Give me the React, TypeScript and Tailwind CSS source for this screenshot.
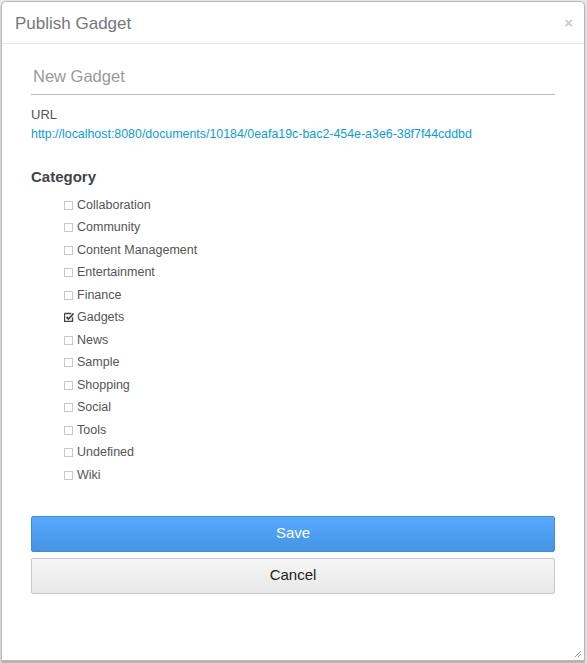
const categories = [
  "Collaboration",
  "Community",
  "Content Management",
  "Entertainment",
  "Finance",
  "Gadgets",
  "News",
  "Sample",
  "Shopping",
  "Social",
  "Tools",
  "Undefined",
  "Wiki",
];

function Box({ checked }: { checked: boolean }) {
  return (
    <span className="w-[9px] h-[9px] border border-[#c8c8c8] bg-white mr-[4px] inline-flex items-center justify-center relative">
      {checked && (
        <svg width="11" height="10" viewBox="0 0 11 10" className="absolute left-[-1px] top-[-2px]">
          <path d="M0.5 1.5 H7 M0.5 1.5 V9.5 H8.5 V5.5" stroke="#444" strokeWidth="1.4" fill="none" />
          <path d="M2.5 5 L4.5 7 L9.5 1.5" stroke="#444" strokeWidth="1.8" fill="none" />
        </svg>
      )}
    </span>
  );
}

export default function App() {
  return (
    <div className="w-[587px] h-[663px] bg-[#e4e8ec] font-['Liberation_Sans',Arial,sans-serif] p-[1px] pr-[2px] pb-[2px]">
      <div className="relative h-full bg-white border border-[#b9b9b9] rounded-t-[5px] shadow-[0_2px_2px_rgba(0,0,0,0.25)] flex flex-col">
        {/* header */}
        <div className="h-[42px] border-b border-[#e5e5e5] flex items-center justify-between pl-[13px] pr-[11px]">
          <h2 className="text-[17px] text-[#777] leading-none pt-[1px]">Publish Gadget</h2>
          <span className="text-[15px] font-bold text-[#ccc] leading-none">×</span>
        </div>

        <div className="px-[29px] pt-[21px] flex flex-col">
          <div className="border-b border-[#bbb] pl-[2px] pb-[5px]">
            <span className="text-[16.5px] text-[#999] leading-[20px]">New Gadget</span>
          </div>

          <div className="mt-[12px] text-[13px] text-[#555] leading-[16px]">URL</div>
          <a className="mt-[3px] text-[12.4px] text-[#0b9be0] leading-[16px]">
            http://localhost:8080/documents/10184/0eafa19c-bac2-454e-a3e6-38f7f44cddbd
          </a>

          <h3 className="mt-[26px] text-[15px] font-bold text-[#444] leading-[18px]">Category</h3>

          <ul className="mt-[6px] pl-[33px] pt-[2px]">
            {categories.map((c) => (
              <li key={c} className="h-[22.5px] flex items-center text-[12.5px] text-[#555]">
                <Box checked={c === "Gadgets"} />
                {c}
              </li>
            ))}
          </ul>

          <div className="mt-[29px] flex flex-col gap-[6px]">
            <button className="h-[36px] rounded-[2px] border border-[#3f8ddc] bg-gradient-to-b from-[#56aaff] to-[#4594e4] text-white text-[15px]">
              Save
            </button>
            <button className="h-[36px] rounded-[2px] border border-[#c8c8c8] bg-gradient-to-b from-[#f6f6f6] to-[#e8e8e8] text-[#222] text-[15px]">
              Cancel
            </button>
          </div>
        </div>

        <svg width="8" height="8" viewBox="0 0 8 8" className="absolute right-[2px] bottom-[2px]">
          <path d="M7 1 L1 7 M7 4 L4 7" stroke="#999" strokeWidth="1" />
        </svg>
      </div>
    </div>
  );
}
